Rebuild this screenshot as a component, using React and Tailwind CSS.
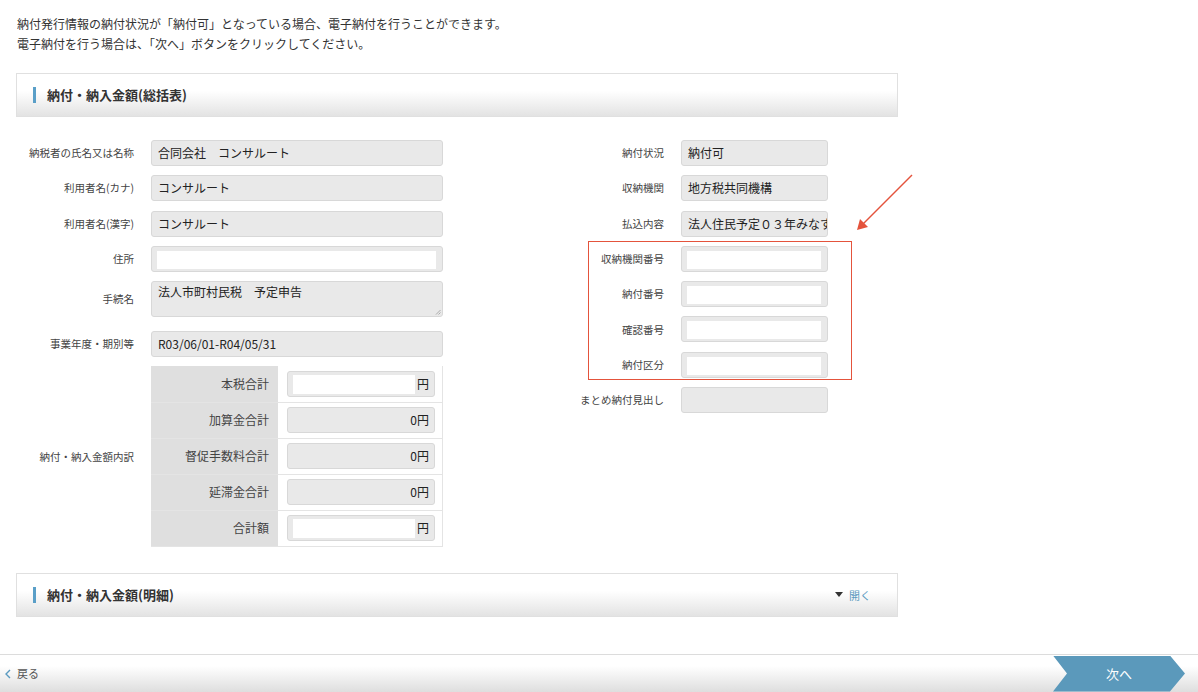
import React from "react";

const leftRows = [
  { label: "納税者の氏名又は名称", value: "合同会社　コンサルート" },
  { label: "利用者名(カナ)", value: "コンサルート" },
  { label: "利用者名(漢字)", value: "コンサルート" },
  { label: "住所", empty: true },
];

const rightRows = [
  { label: "納付状況", value: "納付可" },
  { label: "収納機関", value: "地方税共同機構" },
  { label: "払込内容", value: "法人住民予定０３年みなす" },
  { label: "収納機関番号", empty: true },
  { label: "納付番号", empty: true },
  { label: "確認番号", empty: true },
  { label: "納付区分", empty: true },
  { label: "まとめ納付見出し", value: "" },
];

const amountRows = [
  { label: "本税合計", value: "円", empty: true },
  { label: "加算金合計", value: "0円" },
  { label: "督促手数料合計", value: "0円" },
  { label: "延滞金合計", value: "0円" },
  { label: "合計額", value: "円", empty: true },
];

// gray read-only field
const Field = ({ value, className = "" }) => (
  <div
    className={`h-[26px] rounded-[3px] border border-[#d8d8d8] bg-[#e9e9e9] px-[6px] flex items-center text-[12px] text-[#222] whitespace-nowrap overflow-hidden ${className}`}
  >
    {value}
  </div>
);

// empty input: gray frame with white inner area
const EmptyField = ({ className = "" }) => (
  <div
    className={`h-[26px] rounded-[3px] border border-[#d8d8d8] bg-[#e9e9e9] pt-[4px] pb-[2px] pl-[5px] pr-[6px] ${className}`}
  >
    <div className="h-full bg-white" />
  </div>
);

const SectionHeader = ({ title, right }) => (
  <div className="w-[882px] h-[44px] ml-4 border border-[#e0e0e0] bg-gradient-to-b from-white from-40% to-[#e3e3e3] flex items-center pl-[16px] pr-[26px]">
    <span className="w-[3px] h-[16px] bg-[#5a9fc8]" />
    <span className="ml-[11px] text-[13px] font-bold text-[#333]">{title}</span>
    {right && <div className="ml-auto">{right}</div>}
  </div>
);

const Label = ({ children, width }) => (
  <div className={`${width} shrink-0 pr-[17px] text-right text-[10.5px] text-[#444]`}>
    {children}
  </div>
);

export default function App() {
  return (
    <div className="relative h-[692px] w-[1198px] bg-white flex flex-col overflow-hidden [font-family:'Noto_Sans_CJK_JP','Noto_Sans',sans-serif]">
      {/* intro text */}
      <div className="px-[17px] pt-[14px] text-[12px] leading-[20px] text-[#333]">
        <p>納付発行情報の納付状況が「納付可」となっている場合、電子納付を行うことができます。</p>
        <p>電子納付を行う場合は、「次へ」ボタンをクリックしてください。</p>
      </div>

      <div className="mt-[19px]">
        <SectionHeader title="納付・納入金額(総括表)" />
      </div>

      {/* form */}
      <div className="mt-[23px] px-4 flex">
        {/* left column */}
        <div className="w-[427px] flex flex-col">
          <div className="flex flex-col gap-[9.3px]">
            {leftRows.map((row) => (
              <div key={row.label} className="flex items-center">
                <Label width="w-[135px]">{row.label}</Label>
                {row.empty ? (
                  <EmptyField className="w-[292px]" />
                ) : (
                  <Field value={row.value} className="w-[292px]" />
                )}
              </div>
            ))}
          </div>
          <div className="mt-[9px] flex items-center">
            <Label width="w-[135px]">手続名</Label>
            <div className="relative w-[292px] h-[36px] rounded-[3px] border border-[#d8d8d8] bg-[#e9e9e9] px-[6px] pt-[1px] text-[12px] leading-[18px] text-[#222]">
              法人市町村民税　予定申告
              <svg className="absolute right-[1px] bottom-[1px]" width="6" height="6" viewBox="0 0 6 6">
                <path d="M5.5 1L1 5.5M5.5 3.5L3.5 5.5" stroke="#999" strokeWidth="0.8" />
              </svg>
            </div>
          </div>
          <div className="mt-[14px] flex items-center">
            <Label width="w-[135px]">事業年度・期別等</Label>
            <Field value="R03/06/01-R04/05/31" className="w-[292px]" />
          </div>
          <div className="mt-[9px] flex items-center">
            <Label width="w-[135px]">納付・納入金額内訳</Label>
            <div className="w-[292px] border-r border-b border-[#e4e4e4]">
              {amountRows.map((row, i) => (
                <div key={row.label} className={`flex h-[36px] ${i > 0 ? "border-t border-[#e4e4e4]" : ""}`}>
                  <div className="w-[127px] bg-[#dfdfdf] flex items-center justify-end pr-[9px] text-[12px] text-[#444]">
                    {row.label}
                  </div>
                  <div className="flex-1 flex items-center pl-[9px]">
                    <div className="w-[148px] h-[26px] rounded-[3px] border border-[#d8d8d8] bg-[#e9e9e9] flex items-stretch text-[12px] text-[#222]">
                      {row.empty && <div className="flex-1 ml-[5px] mt-[3px] mb-[2px] bg-white" />}
                      <div className={`${row.empty ? "" : "flex-1"} flex items-center justify-end pl-[2px] pr-[5px]`}>
                        {row.value}
                      </div>
                    </div>
                  </div>
                </div>
              ))}
            </div>
          </div>
        </div>

        {/* right column */}
        <div className="w-[385px] flex flex-col gap-[9.3px]">
          {rightRows.map((row) => (
            <div key={row.label} className="flex items-center">
              <Label width="w-[238px]">{row.label}</Label>
              {row.empty ? (
                <EmptyField className="w-[147px]" />
              ) : (
                <Field value={row.value} className="w-[147px]" />
              )}
            </div>
          ))}
        </div>
      </div>

      <div className="mt-[26px]">
        <SectionHeader
          title="納付・納入金額(明細)"
          right={
            <div className="flex items-center gap-[6px]">
              <svg width="8" height="5" viewBox="0 0 8 5">
                <path d="M0 0H8L4 5Z" fill="#333" />
              </svg>
              <span className="text-[11px] text-[#5a9ac0]">開く</span>
            </div>
          }
        />
      </div>

      {/* footer */}
      <div className="mt-auto h-[38px] border-t border-[#dcdcdc] bg-gradient-to-b from-white from-30% to-[#dedede] flex items-center">
        <div className="flex items-center pl-[5px] gap-[6px]">
          <svg width="6" height="10" viewBox="0 0 6 10">
            <path d="M5 1L1 5L5 9" stroke="#5a9ac0" strokeWidth="1.4" fill="none" />
          </svg>
          <span className="text-[11px] text-[#555]">戻る</span>
        </div>
        <div className="ml-auto mr-[13px] w-[132px] h-[36px] bg-[#5b99bb] flex items-center justify-center text-[13px] text-white [clip-path:polygon(0_0,88.6%_0,100%_50%,88.6%_100%,0_100%,10.6%_50%)]">
          次へ
        </div>
      </div>

      {/* annotation overlay */}
      <div className="absolute left-[588px] top-[241px] w-[264px] h-[139px] border-[1.5px] border-[#e4533c]" />
      <svg className="absolute left-[850px] top-[170px]" width="70" height="66" viewBox="0 0 70 66">
        <path d="M62 5L12 55" stroke="#e4533c" strokeWidth="1.5" />
        <path d="M7 60L10 49L18 57Z" fill="#e4533c" />
      </svg>
    </div>
  );
}
